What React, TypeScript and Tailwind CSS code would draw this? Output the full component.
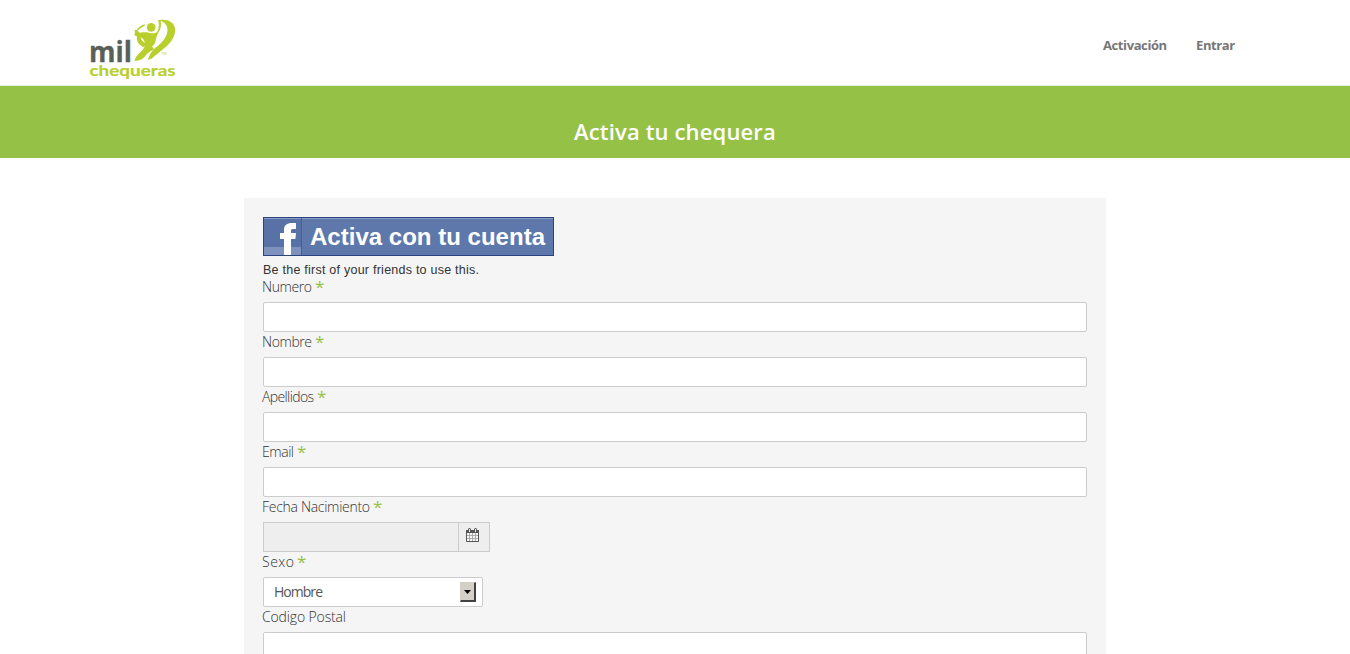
import type { ReactNode } from 'react';

function Logo() {
  return (
    <svg className="overflow-visible" width="90" height="64" viewBox="0 0 90 64" role="img" aria-label="mil chequeras">
      <g fill="#b9cf2c" transform="translate(41.500 -3) scale(.3333)">
        <circle cx="65" cy="34" r="13" />
        <path d="M86 12l7-1c3 13 2 25-5 37-7 10-8 21-11 31-3 9-10 15-18 20-10 6-20 12-27 20-6 7-12 12-17 15 1-7 6-14 13-21 10-9 17-17 18-27 0-10-3-17-9-20-7-3-14-3-22-8l2-16 8 1c1 5 3 7 7 7 9-2 18-2 26 0 12 4 23 2 27-6 4-9 4-21 1-32z" />
        <path d="M92 12c24-3 43 7 45 28 1 25-17 46-40 63-9 7-19 16-31 25l-11 3c4-12 9-23 21-34 17-13 33-29 37-47 4-18-4-31-21-36z" />
        <path d="M24 53c-4 12-2 25 7 33l10 8 10-10c-12-6-18-15-20-30zM15 134c12 1 22-2 29-10 8-11 18-18 30-24l-9-11c-13 4-27 15-35 26z" />
        <path d="M14 43l7 10 4-9c5-6 13-12 21-15l-1-4c-11 4-18 9-23 17z" />
      </g>
      <text x="1" y="43" fill="#596057" stroke="#596057" strokeWidth=".3" fontFamily="Open Sans, sans-serif" fontSize="28" fontWeight="700" textLength="43" lengthAdjust="spacingAndGlyphs">mil</text>
      <text x="1.500" y="57" fill="#b9cf2c" stroke="#b9cf2c" strokeWidth=".2" fontFamily="Lato" fontSize="16" fontWeight="700" textLength="86" lengthAdjust="spacingAndGlyphs">chequeras</text>
      <text x="73.500" y="36" fill="#b9cf2c" fontFamily="Open Sans, sans-serif" fontSize="3.500">TM</text>
    </svg>
  );
}

function Field({ label, width, required = true, children }: { label: string; width: string; required?: boolean; children?: ReactNode }) {
  return (
    <div className="h-[55px]">
      <label className="-ml-px mb-[5px] flex h-5 items-center gap-[3px] text-[14px] leading-5 font-light text-[#333]">
        <span className={`flex ${width}`}>
          <svg className="h-5 w-full overflow-visible">
            <text x="0" y="15" fill="currentColor" textLength="100%" lengthAdjust="spacing">{label}</text>
          </svg>
        </span>
        {required && <span className="text-[17px] font-normal text-[#96c147]">*</span>}
      </label>
      {children ?? <input className="block h-[30px] w-full rounded-[2px] border border-[#ccc] bg-white px-2.5 outline-none" />}
    </div>
  );
}

function Calendar() {
  return (
    <svg width="14" height="15" viewBox="0 0 14 15" fill="none" stroke="#555">
      <path d="M.5 3.500h12v10H.5z" fill="#f8f8f8" />
      <path d="M0 3.500h13" strokeWidth="3" />
      <path d="M3.500 5v8M6.500 5v8M9.500 5v8M1 7.500h11M1 10.500h11" stroke="#aaa" />
      <path d="M3.500 1.500v2M9.500 1.500v2" stroke="#555" strokeWidth="3" strokeLinecap="round" />
      <path d="M3.500 1v3M9.500 1v3" stroke="#eee" />
    </svg>
  );
}

export default function App() {
  return (
    <div className="h-[654px] overflow-hidden bg-white font-['Open_Sans',sans-serif]">
      <header className="flex h-[85px] justify-between pt-[19px] pr-[116px] pl-[88px]">
        <Logo />
        <nav className="flex h-[53px] items-center gap-[30px] text-[13px] font-bold text-[#777]">
          <a className="w-[63px] whitespace-nowrap tracking-[-0.4px]">Activación</a>
          <a className="w-[38px] whitespace-nowrap tracking-[-0.4px]">Entrar</a>
        </nav>
      </header>
      <section className="flex h-[73px] justify-center border-t border-[#e5eddb] bg-[#96c147] pt-[30px]">
        <h1 className="text-[22px] leading-[30px] font-semibold tracking-[0.15px] text-white">Activa tu chequera</h1>
      </section>
      <main className="mx-auto mt-10 h-[600px] w-[862px] bg-[#f5f5f5] px-[19px] pt-[19px]">
        <button className="flex h-[39px] w-[291px] border border-[#29447e] bg-[#5f78ab] font-['Liberation_Sans',sans-serif] text-[24px] leading-[37px] font-bold text-white">
          <span className="h-full w-[38px] border-r border-[#435f96]">
            <svg width="37" height="37" viewBox="0 0 37 37">
              <path fill="#5872a7" d="M0 0h37v37H0z" />
              <path fill="#7f92bd" d="M0 29h37v8H0z" />
              <path fill="#8a9cc2" d="M0 0h37v1H0z" />
              <path fill="#fff" d="M20 37V21h-4v-6h4v-3c0-5 3-7 8-7h4v6h-3c-2 0-2 1-2 2v2h5l-.6 6H27v16z" />
            </svg>
          </span>
          <span className="flex h-full flex-1 border-t border-[#8a9cc2] pl-2">
            <svg className="h-9 w-[236px] overflow-visible">
              <text x="0" y="26" fill="white" textLength="235" lengthAdjust="spacing">Activa con tu cuenta</text>
            </svg>
          </span>
        </button>
        <p className="h-[21px] pt-1 font-['Liberation_Sans',sans-serif] text-[12.5px] leading-[18px] text-[#333]">
          <svg className="h-[18px] w-[216px] overflow-visible">
            <text x="0" y="14" fill="currentColor" textLength="216" lengthAdjust="spacing">Be the first of your friends to use this.</text>
          </svg>
        </p>
        <Field label="Numero" width="w-[50px]" />
        <Field label="Nombre" width="w-[50px]" />
        <Field label="Apellidos" width="w-[52px]" />
        <Field label="Email" width="w-[32px]" />
        <Field label="Fecha Nacimiento" width="w-[108px]">
          <div className="flex h-[30px] w-[227px] border border-[#ccc] bg-[#eee]">
            <div className="w-[194px]" />
            <div className="flex flex-1 justify-center border-l border-[#ccc] pt-[5px] pr-[2px]"><Calendar /></div>
          </div>
        </Field>
        <Field label="Sexo" width="w-[32px]">
          <div className="flex h-[30px] w-[220px] items-center justify-between rounded-[2px] border border-[#ccc] bg-white pr-1.5 pl-2.5 text-[14px] text-[#555]">
            <svg className="h-7 w-[49px] overflow-visible"><text x="0" y="19" fill="currentColor" textLength="49" lengthAdjust="spacing">Hombre</text></svg>
            <span className="flex h-5 w-4 items-center justify-center border-t border-r-2 border-b-2 border-l border-t-[#d4d0c8] border-r-[#404040] border-b-[#404040] border-l-[#d4d0c8] bg-[#d4d0c8]">
              <svg width="7" height="4"><path d="M0 0h7L3.500 4z" fill="#000" /></svg>
            </span>
          </div>
        </Field>
        <Field label="Codigo Postal" width="w-[84px]" required={false} />
      </main>
    </div>
  );
}
